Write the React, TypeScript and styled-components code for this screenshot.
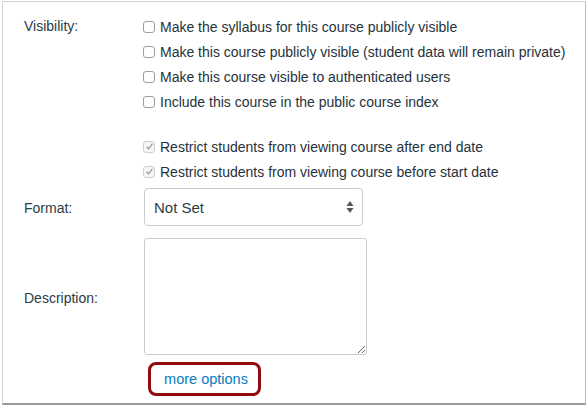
import React from 'react';
import styled, { createGlobalStyle } from 'styled-components';

const GlobalStyle = createGlobalStyle`
  html, body {
    margin: 0;
    padding: 0;
    background: #fff;
  }
  body {
    font-family: "Liberation Sans", Arial, sans-serif;
    color: #2d3b45;
  }
`;

const Frame = styled.div`
  margin: 1px 0 0 2px;
  width: 584px;
  height: 404px;
  border: 1px solid #d2d2d2;
  border-bottom: 2px solid #9a9a9a;
  border-right: 1px solid #bdbdbd;
  background: #fff;
  padding: 12px 0 0 21px;
  box-sizing: border-box;
`;

const FormRow = styled.div<{ $align?: string }>`
  display: grid;
  grid-template-columns: 120px 1fr;
  align-items: ${(p) => p.$align || 'start'};
`;

const Label = styled.label<{ $mt?: number }>`
  font-size: 14px;
  line-height: 25px;
  color: #2d3b45;
  margin-top: ${(p) => p.$mt || 0}px;
`;

const OptionList = styled.div`
  display: flex;
  flex-direction: column;
`;

const Option = styled.label<{ $gap?: number }>`
  display: flex;
  align-items: center;
  height: 25px;
  font-size: 14px;
  margin-top: ${(p) => p.$gap || 0}px;
  color: #26323a;
`;

const Box = styled.span<{ $checked?: boolean }>`
  width: 12px;
  height: 12px;
  border: 1px solid ${(p) => (p.$checked ? '#cfcfcf' : '#9d9d9d')};
  border-radius: 3px;
  background: ${(p) => (p.$checked ? '#f6f6f6' : '#fff')};
  margin: 0 5px 0 -1px;
  display: inline-flex;
  align-items: center;
  justify-content: center;
  flex-shrink: 0;
  box-sizing: border-box;
`;

const Select = styled.div`
  margin-top: 4px;
  width: 219px;
  height: 38px;
  border: 1px solid #c7cdd1;
  border-radius: 4px;
  box-sizing: border-box;
  display: flex;
  align-items: center;
  justify-content: space-between;
  padding: 0 8px 0 9px;
  font-size: 15px;
  color: #2d3b45;
`;

const TextArea = styled.textarea`
  margin-top: 12px;
  width: 223px;
  height: 117px;
  border: 1px solid #c7cdd1;
  border-radius: 3px;
  box-sizing: border-box;
  resize: vertical;
  outline: none;
  font-family: inherit;
`;

const MoreWrap = styled.div`
  margin-top: 7px;
  margin-left: 4px;
  width: 113px;
  height: 34px;
  border: 3px solid #930a0f;
  border-radius: 8px;
  box-sizing: border-box;
  display: flex;
  align-items: center;
  justify-content: center;
`;

const MoreLink = styled.a`
  color: #0a7bc1;
  font-size: 14.5px;
  text-decoration: none;
  padding-left: 3px;
`;

const Check = () => (
  <svg width="9" height="9" viewBox="0 0 9 9">
    <path d="M1.6 4.8 L3.6 6.8 L7.4 1.8" fill="none" stroke="#9a9a9a" strokeWidth="1.3" />
  </svg>
);

const Arrows = () => (
  <svg width="8" height="14" viewBox="0 0 8 14">
    <path d="M4 1 L7.5 6 L0.5 6 Z" fill="#555" />
    <path d="M4 13 L7.5 8 L0.5 8 Z" fill="#555" />
  </svg>
);

const visibility = [
  'Make the syllabus for this course publicly visible',
  'Make this course publicly visible (student data will remain private)',
  'Make this course visible to authenticated users',
  'Include this course in the public course index',
];

const restrictions = [
  'Restrict students from viewing course after end date',
  'Restrict students from viewing course before start date',
];

const App = () => (
  <>
    <GlobalStyle />
    <Frame>
      <FormRow>
        <Label>Visibility:</Label>
        <OptionList>
          {visibility.map((text) => (
            <Option key={text}>
              <Box />
              {text}
            </Option>
          ))}
          {restrictions.map((text, i) => (
            <Option key={text} $gap={i === 0 ? 20 : 0}>
              <Box $checked>
                <Check />
              </Box>
              {text}
            </Option>
          ))}
        </OptionList>
      </FormRow>
      <FormRow $align="end">
        <Label style={{ lineHeight: '36px' }}>Format:</Label>
        <Select>
          Not Set
          <Arrows />
        </Select>
      </FormRow>
      <FormRow>
        <Label $mt={60}>Description:</Label>
        <TextArea />
      </FormRow>
      <FormRow>
        <span />
        <MoreWrap>
          <MoreLink href="#">more options</MoreLink>
        </MoreWrap>
      </FormRow>
    </Frame>
  </>
);

export default App;
